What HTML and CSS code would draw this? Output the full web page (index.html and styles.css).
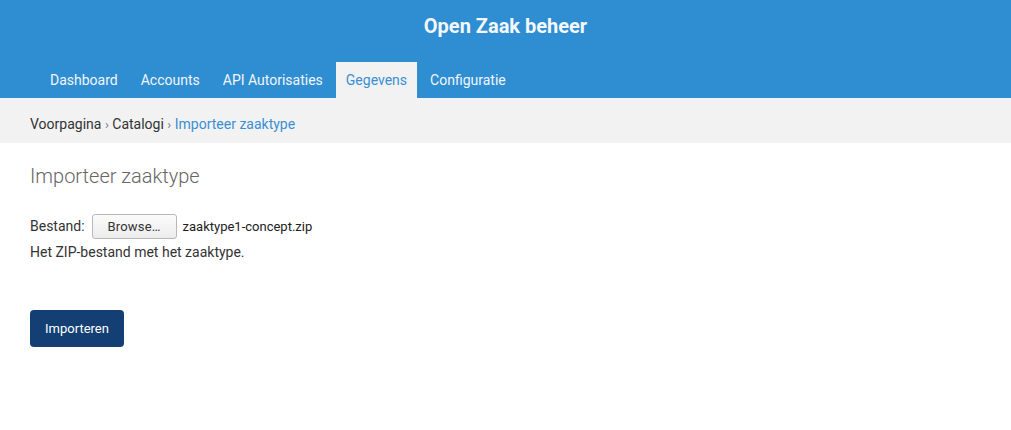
FILE: index.html
```html
<!DOCTYPE html>
<html lang="nl">
<head>
<meta charset="utf-8">
<title>Importeer zaaktype | Open Zaak beheer</title>
<link rel="stylesheet" href="styles.css">
</head>
<body>
<header class="header">
  <div class="branding">Open Zaak beheer</div>
  <nav class="nav">
    <a class="nav-item" href="#">Dashboard</a>
    <a class="nav-item" href="#">Accounts</a>
    <a class="nav-item" href="#">API Autorisaties</a>
    <a class="nav-item active" href="#">Gegevens</a>
    <a class="nav-item" href="#">Configuratie</a>
  </nav>
</header>
<div class="breadcrumbs">
  <a href="#">Voorpagina</a> <span class="sep">›</span> <a href="#">Catalogi</a> <span class="sep">›</span> <span class="current">Importeer zaaktype</span>
</div>
<main class="content">
  <h1 class="title">Importeer zaaktype</h1>
  <form class="form">
    <div class="field">
      <label class="label">Bestand:</label>
      <span class="file-btn">Browse…</span>
      <span class="file-name">zaaktype1-concept.zip</span>
    </div>
    <div class="help">Het ZIP-bestand met het zaaktype.</div>
    <button class="submit" type="button">Importeren</button>
  </form>
</main>
</body>
</html>
```

FILE: styles.css
```css
* { box-sizing: border-box; }
html, body { margin: 0; padding: 0; background: #fff; }
body {
  font-family: Roboto, "Liberation Sans", sans-serif;
  font-size: 14px;
  color: #333;
}
a { text-decoration: none; color: inherit; }

.header {
  background: #2f8dd2;
  color: #fff;
}
.branding {
  height: 62px;
  display: flex;
  align-items: center;
  justify-content: center;
  font-size: 20px;
  font-weight: 700;
  padding-bottom: 10px;
  color: #f4f8fc;
}
.nav {
  display: flex;
  gap: 3px;
  padding-left: 40px;
  height: 36px;
}
.nav-item {
  display: flex;
  align-items: center;
  padding: 0 10px;
  font-size: 14px;
  color: #f2f6fa;
}
.nav-item.active {
  background: #f2f2f2;
  color: #3a8fd4;
}

.breadcrumbs {
  background: #f2f2f2;
  height: 45px;
  padding: 17px 30px 0;
  line-height: 18px;
  font-size: 14px;
  color: #333;
}
.breadcrumbs .sep { color: #777; font-size: 13px; }
.breadcrumbs .current { color: #3a8fd4; }

.content { padding: 0 30px; }
.title {
  margin: 20px 0 0;
  font-size: 20px;
  font-weight: 300;
  color: #666;
  line-height: 26px;
}
.form { margin-top: 24px; }
.field {
  display: flex;
  align-items: center;
  height: 26px;
}
.label { font-size: 14px; color: #333; margin-right: 7px; }
.file-btn {
  display: inline-flex;
  align-items: center;
  justify-content: center;
  width: 85px;
  height: 25px;
  border: 1px solid #b8b8b8;
  border-radius: 3px;
  background: linear-gradient(#fbfbfb, #ececec);
  font-size: 13px;
  color: #333;
  letter-spacing: 0.2px;
}
.file-name {
  margin-left: 6px;
  font-size: 13px;
  color: #222;
}
.help {
  margin-top: 4px;
  font-size: 14px;
  color: #333;
  line-height: 18px;
}
.submit {
  margin-top: 49px;
  display: block;
  width: 94px;
  height: 37px;
  border: 0;
  border-radius: 4px;
  background: #133f74;
  color: #fff;
  font-family: Roboto, "Liberation Sans", sans-serif;
  font-size: 13px;
  padding: 0;
}
```
